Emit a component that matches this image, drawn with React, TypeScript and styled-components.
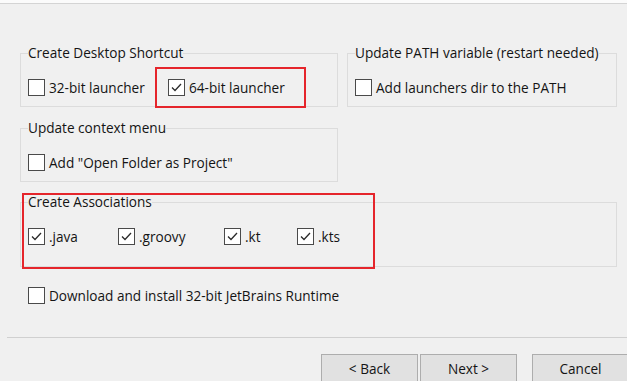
import React from "react";
import styled, { createGlobalStyle } from "styled-components";

const GlobalStyle = createGlobalStyle`
  html, body {
    margin: 0;
    padding: 0;
    background: #f0f0f0;
  }
  body {
    font-family: "Open Sans", "Noto Sans", sans-serif;
    overflow: hidden;
  }
`;

const Window = styled.div`
  position: relative;
  width: 627px;
  height: 381px;
  overflow: hidden;
  background: #f0f0f0;
  color: #141414;
  font-size: 13.6px;
`;

const TopEdge = styled.div`
  height: 3px;
  background: #fbfbfb;
  border-bottom: 1px solid #d4d4d4;
`;

const Content = styled.div`
  padding: 40px 0 0 20px;
`;

const TopRow = styled.div`
  display: grid;
  grid-template-columns: 318px 270px;
  column-gap: 9px;
  align-items: start;
`;

const Group = styled.fieldset<{ $width?: number; $top?: number; $bottom?: number }>`
  box-sizing: border-box;
  width: ${(p) => (p.$width ? `${p.$width}px` : "auto")};
  margin: ${(p) => p.$top ?? 0}px 0 0;
  padding: 16px 7px ${(p) => p.$bottom ?? 10}px;
  border: 1px solid #dcdcdc;
  border-radius: 0;
  min-width: 0;
`;

const Legend = styled.legend`
  padding: 0;
  line-height: 18px;
  color: #141414;
`;

const Row = styled.div`
  display: flex;
  align-items: center;
`;

const Option = styled.label<{ $width?: number }>`
  display: flex;
  align-items: center;
  gap: 4px;
  height: 18px;
  width: ${(p) => (p.$width ? `${p.$width}px` : "auto")};
  flex: none;
  white-space: nowrap;
`;

const Box = styled.span`
  box-sizing: border-box;
  display: inline-flex;
  align-items: center;
  justify-content: center;
  width: 17px;
  height: 17px;
  border: 1px solid #4a4a4a;
  background: #ffffff;
`;

const Standalone = styled.div`
  margin: 19px 0 0 8px;
`;

const Separator = styled.div`
  margin: 33px 0 0 7px;
  height: 1px;
  background: #d0d0d0;
`;

const Footer = styled.div`
  display: flex;
  margin: 16px 0 0 321px;
`;

const Button = styled.div<{ $gap?: number }>`
  box-sizing: border-box;
  flex: none;
  width: 97px;
  height: 28px;
  margin-left: ${(p) => p.$gap ?? 0}px;
  display: flex;
  align-items: center;
  justify-content: center;
  background: #e1e1e1;
  border: 1px solid #adadad;
  color: #141414;
`;

const Highlight = styled.div<{ $x: number; $y: number; $w: number; $h: number }>`
  position: absolute;
  box-sizing: border-box;
  left: ${(p) => p.$x}px;
  top: ${(p) => p.$y}px;
  width: ${(p) => p.$w}px;
  height: ${(p) => p.$h}px;
  border: 2px solid #e5252b;
  pointer-events: none;
`;

interface CheckProps {
  label: string;
  checked?: boolean;
  width?: number;
}

const Check: React.FC<CheckProps> = ({ label, checked, width }) => (
  <Option $width={width}>
    <Box>
      {checked && (
        <svg width="13" height="13" viewBox="0 0 13 13">
          <polyline
            points="2,6.5 5,9.5 11,3"
            fill="none"
            stroke="#2b2b2b"
            strokeWidth="1.3"
          />
        </svg>
      )}
    </Box>
    {label}
  </Option>
);

export default function App(): JSX.Element {
  return (
    <Window>
      <GlobalStyle />
      <TopEdge />
      <Content>
        <TopRow>
          <Group>
            <Legend>Create Desktop Shortcut</Legend>
            <Row>
              <Check label="32-bit launcher" width={140} />
              <Check label="64-bit launcher" checked />
            </Row>
          </Group>
          <Group>
            <Legend>Update PATH variable (restart needed)</Legend>
            <Row>
              <Check label="Add launchers dir to the PATH" />
            </Row>
          </Group>
        </TopRow>
        <Group $width={318} $top={12}>
          <Legend>Update context menu</Legend>
          <Row>
            <Check label={'Add "Open Folder as Project"'} />
          </Row>
        </Group>
        <Group $width={597} $top={11} $bottom={21}>
          <Legend>Create Associations</Legend>
          <Row>
            <Check label=".java" checked width={90} />
            <Check label=".groovy" checked width={106} />
            <Check label=".kt" checked width={73} />
            <Check label=".kts" checked />
          </Row>
        </Group>
        <Standalone>
          <Check label="Download and install 32-bit JetBrains Runtime" />
        </Standalone>
      </Content>
      <Separator />
      <Footer>
        <Button>&lt; Back</Button>
        <Button $gap={2}>Next &gt;</Button>
        <Button $gap={15}>Cancel</Button>
      </Footer>
      <Highlight $x={155} $y={67} $w={151} $h={41} />
      <Highlight $x={22} $y={193} $w={353} $h={76} />
    </Window>
  );
}
